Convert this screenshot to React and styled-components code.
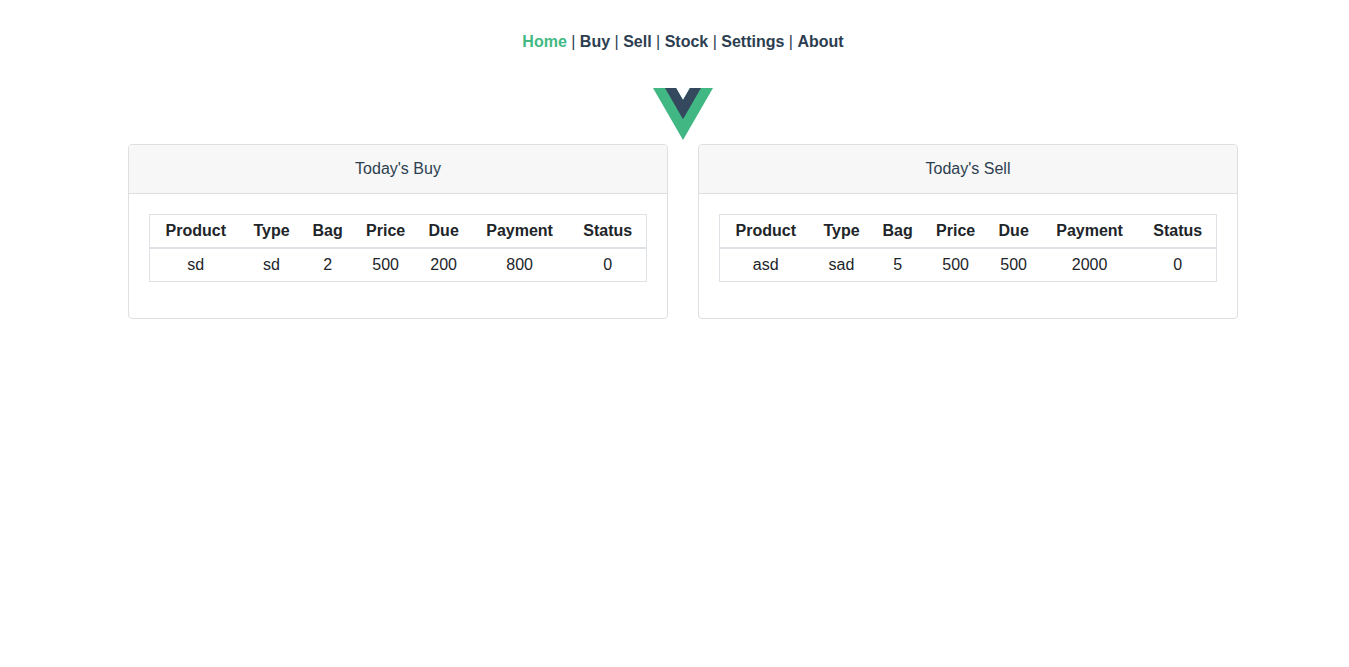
import React from "react";
import styled, { createGlobalStyle } from "styled-components";

const GlobalStyle = createGlobalStyle`
  *, *::before, *::after { box-sizing: border-box; }
  body {
    margin: 0;
    background: #fff;
    color: #2c3e50;
    font-family: "Liberation Sans", Arial, Helvetica, sans-serif;
    font-size: 16px;
    line-height: 24px;
  }
`;

const Page = styled.div`
  padding-left: 17px;
  text-align: center;
`;

const Nav = styled.nav`
  padding: 30px;
`;

const NavLink = styled.a`
  color: ${({ $active }) => ($active ? "#42b983" : "#2c3e50")};
  font-weight: bold;
  text-decoration: none;
`;

const LogoRow = styled.div`
  display: flex;
  align-items: center;
  justify-content: center;
  height: 60px;
`;

const Container = styled.main`
  display: grid;
  grid-template-columns: repeat(auto-fit, minmax(400px, 1fr));
  gap: 30px;
  max-width: 1140px;
  margin: 0 auto;
  padding: 0 15px;
`;

const Card = styled.section`
  background: #fff;
  border: 1px solid #dfdfdf;
  border-radius: 4px;
  overflow: hidden;
`;

const CardHeader = styled.header`
  padding: 12px 20px;
  background: #f7f7f7;
  border-bottom: 1px solid #dfdfdf;
`;

const CardBody = styled.div`
  padding: 20px;
`;

const Table = styled.table`
  width: 100%;
  margin-bottom: 16px;
  border: 1px solid #dee2e6;
  border-spacing: 0;
  color: #212529;
`;

const HeadCell = styled.th`
  padding: 4px 5px;
  border-bottom: 2px solid #dee2e6;
`;

const Cell = styled.td`
  padding: 4px 5px;
`;

const links = ["Home", "Buy", "Sell", "Stock", "Settings", "About"];
const columns = ["Product", "Type", "Bag", "Price", "Due", "Payment", "Status"];

function Logo() {
  return (
    <svg width="60" height="52" viewBox="0 0 261.76 226.69" role="img" aria-label="Vue logo">
      <path d="M161.096 0l-30.225 52.351L100.647 0H0l130.872 226.688L261.749 0z" fill="#41b883" />
      <path d="M161.096 0l-30.225 52.351L100.647 0H52.346l78.526 136.01L209.398 0z" fill="#34495e" />
    </svg>
  );
}

function TradeCard({ title, rows }) {
  return (
    <Card>
      <CardHeader>{title}</CardHeader>
      <CardBody>
        <Table aria-label={title}>
          <thead>
            <tr>
              {columns.map((name) => (
                <HeadCell key={name} scope="col">{name}</HeadCell>
              ))}
            </tr>
          </thead>
          <tbody>
            {rows.map((row, r) => (
              <tr key={r}>
                {row.map((value, c) => (
                  <Cell key={c}>{value}</Cell>
                ))}
              </tr>
            ))}
          </tbody>
        </Table>
      </CardBody>
    </Card>
  );
}

export default function App() {
  return (
    <>
      <GlobalStyle />
      <Page>
        <Nav>
          {links.map((name, i) => (
            <React.Fragment key={name}>
              {i > 0 && " | "}
              <NavLink href={`#${name.toLowerCase()}`} $active={i === 0}>{name}</NavLink>
            </React.Fragment>
          ))}
        </Nav>
        <LogoRow>
          <Logo />
        </LogoRow>
        <Container>
          <TradeCard title="Today's Buy" rows={[["sd", "sd", 2, 500, 200, 800, 0]]} />
          <TradeCard title="Today's Sell" rows={[["asd", "sad", 5, 500, 500, 2000, 0]]} />
        </Container>
      </Page>
    </>
  );
}
